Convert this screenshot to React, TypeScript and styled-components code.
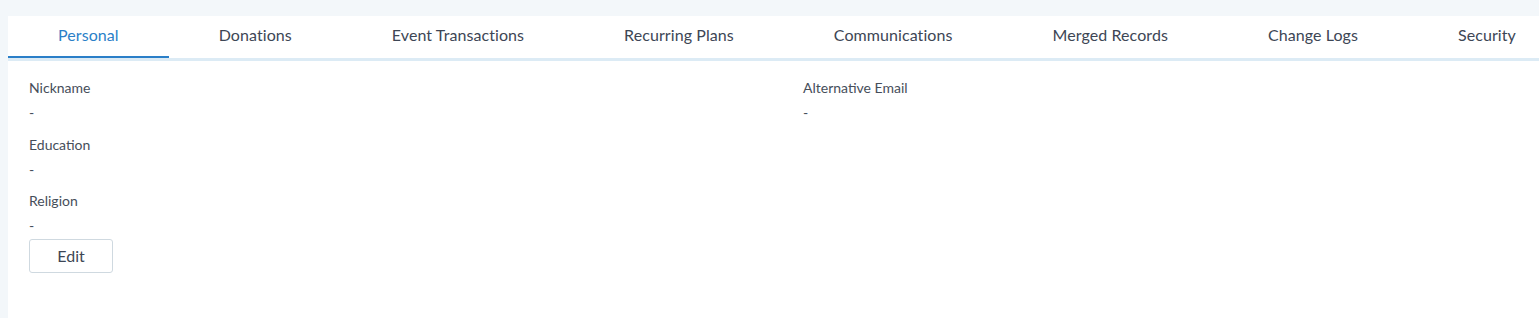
import React, { FC } from "react";
import styled, { createGlobalStyle } from "styled-components";

const GlobalStyle = createGlobalStyle`
  html, body {
    margin: 0;
    padding: 0;
    background: #f3f7fa;
    font-family: Lato, "Open Sans", "Liberation Sans", sans-serif;
    color: #333a44;
  }
`;

export const Page = styled.div`
  padding: 16px 0 0 8px;
  min-height: 302px;
`;

export const Card = styled.section`
  background: #fff;
  min-height: 302px;
  overflow: hidden;
`;

export const TabBar = styled.nav`
  display: flex;
  height: 42px;
  border-bottom: 3px solid #dcebf5;
  white-space: nowrap;
`;

export const Tab = styled.div<{ $active?: boolean }>`
  flex: none;
  padding: 0 50px 5px;
  display: flex;
  align-items: center;
  font-size: 16px;
  font-weight: 400;
  letter-spacing: 0.08px;
  color: ${(p) => (p.$active ? "#2b7fc8" : "#3d4655")};
  box-shadow: ${(p) => (p.$active ? "inset 0 -2px 0 #2b7fc8" : "none")};
  cursor: pointer;
`;

export const Body = styled.div`
  display: grid;
  grid-template-columns: 774px 1fr;
  padding: 18px 21px 0;
`;

export const Column = styled.div`
  display: flex;
  flex-direction: column;
`;

export const Field = styled.div`
  height: 56.5px;
`;

export const Label = styled.div`
  font-size: 14px;
  line-height: 18px;
  color: #464e5a;
`;

export const Value = styled.div`
  margin-top: 7px;
  font-size: 14px;
  line-height: 18px;
  color: #464e5a;
`;

export const Actions = styled.div`
  display: flex;
  margin-top: -10px;
`;

export const EditButton = styled.button`
  width: 84px;
  height: 34px;
  background: #fff;
  border: 1px solid #cfd9e0;
  border-radius: 3px;
  font-family: inherit;
  font-size: 16px;
  color: #3d4655;
  cursor: pointer;
`;

const tabs = [
  "Personal",
  "Donations",
  "Event Transactions",
  "Recurring Plans",
  "Communications",
  "Merged Records",
  "Change Logs",
  "Security",
];

type FieldProps = { label: string; value?: string };
const InfoField: FC<FieldProps> = ({ label, value = "-" }) => (
  <Field>
    <Label>{label}</Label>
    <Value>{value}</Value>
  </Field>
);

export default function App() {
  return (
    <>
      <GlobalStyle />
      <Page>
        <Card>
          <TabBar>
            {tabs.map((t, i) => (
              <Tab key={t} $active={i === 0}>
                {t}
              </Tab>
            ))}
          </TabBar>
          <Body>
            <Column>
              <InfoField label="Nickname" />
              <InfoField label="Education" />
              <InfoField label="Religion" />
              <Actions>
                <EditButton>Edit</EditButton>
              </Actions>
            </Column>
            <Column>
              <InfoField label="Alternative Email" />
            </Column>
          </Body>
        </Card>
      </Page>
    </>
  );
}
